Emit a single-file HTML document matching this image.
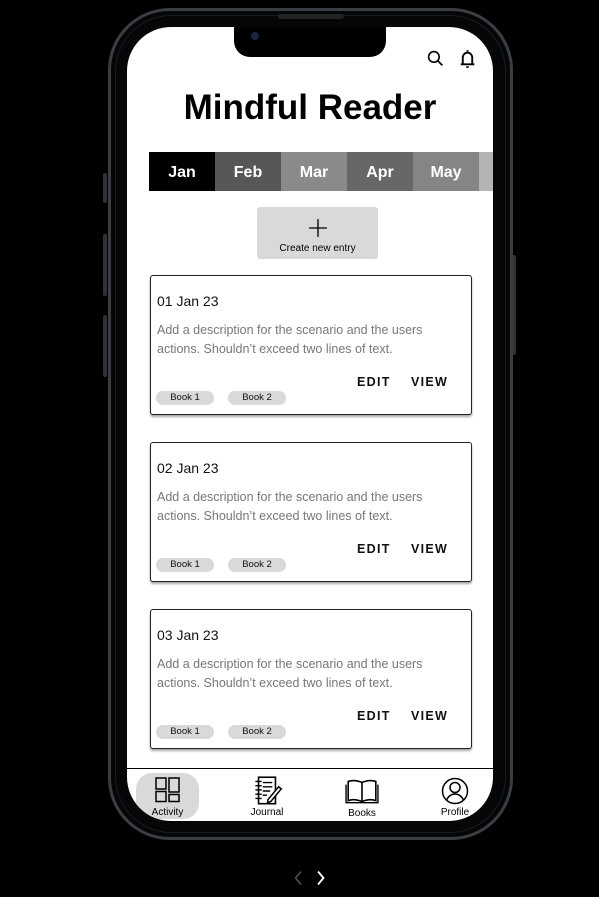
<!DOCTYPE html>
<html><head><meta charset="utf-8"><style>
*{margin:0;padding:0;box-sizing:border-box}
body{width:599px;height:897px;background:#000;position:relative;overflow:hidden;font-family:"Liberation Sans",sans-serif}
.frame{position:absolute;left:108px;top:8px;width:405px;height:832px;border-radius:62px;border:3px solid #3a3e42;background:#050607}
.frame2{position:absolute;left:115px;top:15px;width:391px;height:818px;border-radius:56px;border:1px solid #1a1c1e}
.btn{position:absolute;background:#2e3236;border-radius:2px}
.screen{position:absolute;left:127px;top:27px;width:366px;height:794px;background:#fff;border-radius:44px;overflow:hidden}
.notch{position:absolute;left:107px;top:0;width:152px;height:30px;background:#000;border-radius:0 0 16px 16px}
.spk{position:absolute;left:278px;top:14px;width:66px;height:5px;border-radius:3px;background:#222}
.cam{position:absolute;left:251px;top:32px;width:8px;height:8px;border-radius:50%;background:#1a2340}
h1{position:absolute;left:0;width:366px;top:61px;text-align:center;font-size:35px;font-weight:bold;color:#000}
.tabs{position:absolute;left:22px;top:125px;height:39px;display:flex}
.tab{width:66px;height:39px;color:#fff;font-weight:bold;font-size:16px;text-align:center;line-height:42px}
.create{position:absolute;left:130px;top:180px;width:121px;height:52px;background:#d9d9d9;border-radius:3px;text-align:center;font-size:10px;color:#000}
.card{position:absolute;left:23px;width:322px;height:140px;border:1px solid #222;border-radius:3px;box-shadow:0 2px 2px rgba(0,0,0,.35);background:#fff}
.card .d{position:absolute;left:6px;top:17px;font-size:14px;color:#111}
.card .t{position:absolute;left:6px;top:45px;font-size:12.5px;line-height:19px;color:#777;width:310px}
.card .a{position:absolute;top:99px;font-size:12.5px;font-weight:bold;letter-spacing:1.3px;color:#111}
.chip{position:absolute;top:115px;width:58px;height:14px;background:#d9d9d9;border-radius:7px;font-size:9.5px;text-align:center;line-height:14px;color:#111}
.nav{position:absolute;left:0;top:741px;width:366px;height:60px;border-top:1px solid #000}
.ni{position:absolute;top:0;text-align:center;font-size:10px;color:#000}
</style></head><body>
<div class="btn" style="left:103px;top:173px;width:4px;height:30px"></div>
<div class="btn" style="left:103px;top:234px;width:4px;height:62px"></div>
<div class="btn" style="left:103px;top:315px;width:4px;height:62px"></div>
<div class="btn" style="left:512px;top:255px;width:4px;height:100px"></div>
<div class="frame"></div><div class="frame2"></div>
<div class="screen">
<div class="notch"></div>
<svg style="position:absolute;left:300px;top:23px" width="17" height="17" viewBox="0 0 16 16"><circle cx="6.5" cy="6.5" r="5" fill="none" stroke="#000" stroke-width="1.5"/><path d="M10 10l4.5 4.5" stroke="#000" stroke-width="1.6"/></svg>
<svg style="position:absolute;left:331px;top:21px" width="19" height="21" viewBox="0 0 18 20"><path d="M9 2v1.5M4.5 15V9a4.5 4.5 0 0 1 9 0v6M2.5 15.5h13" fill="none" stroke="#000" stroke-width="1.8"/><path d="M7.5 17.5a1.5 1.5 0 0 0 3 0z" fill="#000"/></svg>
<h1>Mindful Reader</h1>
<div class="tabs">
<div class="tab" style="background:#000">Jan</div><div class="tab" style="background:#575757">Feb</div><div class="tab" style="background:#8a8a8a">Mar</div><div class="tab" style="background:#676767">Apr</div><div class="tab" style="background:#858585">May</div><div class="tab" style="background:#b4b4b4;width:20px"></div>
</div>
<div class="create"><svg style="display:block;margin:11px auto 5px" width="20" height="20" viewBox="0 0 18 18"><path d="M9 1v16M1 9h16" stroke="#000" stroke-width="1.2"/></svg>Create new entry</div>

<div class="card" style="top:248px"><div class="d">01 Jan 23</div><div class="t">Add a description for the scenario and the users actions. Shouldn’t exceed two lines of text.</div><div class="a" style="left:206px">EDIT</div><div class="a" style="left:260px">VIEW</div><div class="chip" style="left:5px">Book 1</div><div class="chip" style="left:77px">Book 2</div></div>
<div class="card" style="top:415px"><div class="d">02 Jan 23</div><div class="t">Add a description for the scenario and the users actions. Shouldn’t exceed two lines of text.</div><div class="a" style="left:206px">EDIT</div><div class="a" style="left:260px">VIEW</div><div class="chip" style="left:5px">Book 1</div><div class="chip" style="left:77px">Book 2</div></div>
<div class="card" style="top:582px"><div class="d">03 Jan 23</div><div class="t">Add a description for the scenario and the users actions. Shouldn’t exceed two lines of text.</div><div class="a" style="left:206px">EDIT</div><div class="a" style="left:260px">VIEW</div><div class="chip" style="left:5px">Book 1</div><div class="chip" style="left:77px">Book 2</div></div>

<div class="nav">
<div style="position:absolute;left:9px;top:4px;width:63px;height:46px;background:#d9d9d9;border-radius:16px"></div>
<div class="ni" style="left:9px;width:63px;top:8px"><svg width="28" height="26" viewBox="0 0 28 26"><rect x="2" y="1" width="10" height="11" fill="none" stroke="#000" stroke-width="1.5"/><rect x="15" y="1" width="10" height="14" fill="none" stroke="#000" stroke-width="1.5"/><rect x="2" y="14.5" width="10" height="10" fill="none" stroke="#000" stroke-width="1.5"/><rect x="15" y="17.5" width="10" height="7" fill="none" stroke="#000" stroke-width="1.5"/></svg><div style="margin-top:1px">Activity</div></div>
<div class="ni" style="left:110px;width:60px;top:7px"><svg width="36" height="30" viewBox="0 0 34 28"><rect x="9" y="1" width="16" height="25" fill="none" stroke="#000" stroke-width="1.5"/><path d="M6 5h6M6 9h6M6 13h6M6 17h6M6 21h6M13 6h9M13 10h9M13 14h7M13 18h4" stroke="#000" stroke-width="1.3"/><path d="M18 22l10-12 2.5 2L20.5 24l-3 1z" fill="#fff" stroke="#000" stroke-width="1.4"/></svg><div style="margin-top:-2px">Journal</div></div>
<div class="ni" style="left:205px;width:60px;top:9px"><svg width="34" height="26" viewBox="0 0 32 24"><path d="M3 3q6-2 13 1v18q-7-3-13-1zM29 3q-6-2-13 1v18q7-3 13-1z" fill="none" stroke="#000" stroke-width="1.5"/><path d="M1 6v17h30V6" fill="none" stroke="#000" stroke-width="1.3"/></svg><div style="margin-top:1px">Books</div></div>
<div class="ni" style="left:300px;width:56px;top:8px"><svg width="28" height="28" viewBox="0 0 28 28"><circle cx="14" cy="14" r="12.5" fill="none" stroke="#000" stroke-width="1.5"/><circle cx="14" cy="10.5" r="5" fill="none" stroke="#000" stroke-width="1.5"/><path d="M5.5 23q3-6 8.5-6t8.5 6" fill="none" stroke="#000" stroke-width="1.5"/></svg><div style="margin-top:-1px">Profile</div></div>
</div>
</div>
<div class="spk"></div><div class="cam"></div>
<svg style="position:absolute;left:293px;top:870px" width="36" height="16" viewBox="0 0 36 16"><path d="M8 1.5L2.5 8 8 14.5" fill="none" stroke="#555" stroke-width="1.5"/><path d="M25 1.5l5.5 6.5-5.5 6.5" fill="none" stroke="#fff" stroke-width="1.8"/></svg>
</body></html>
